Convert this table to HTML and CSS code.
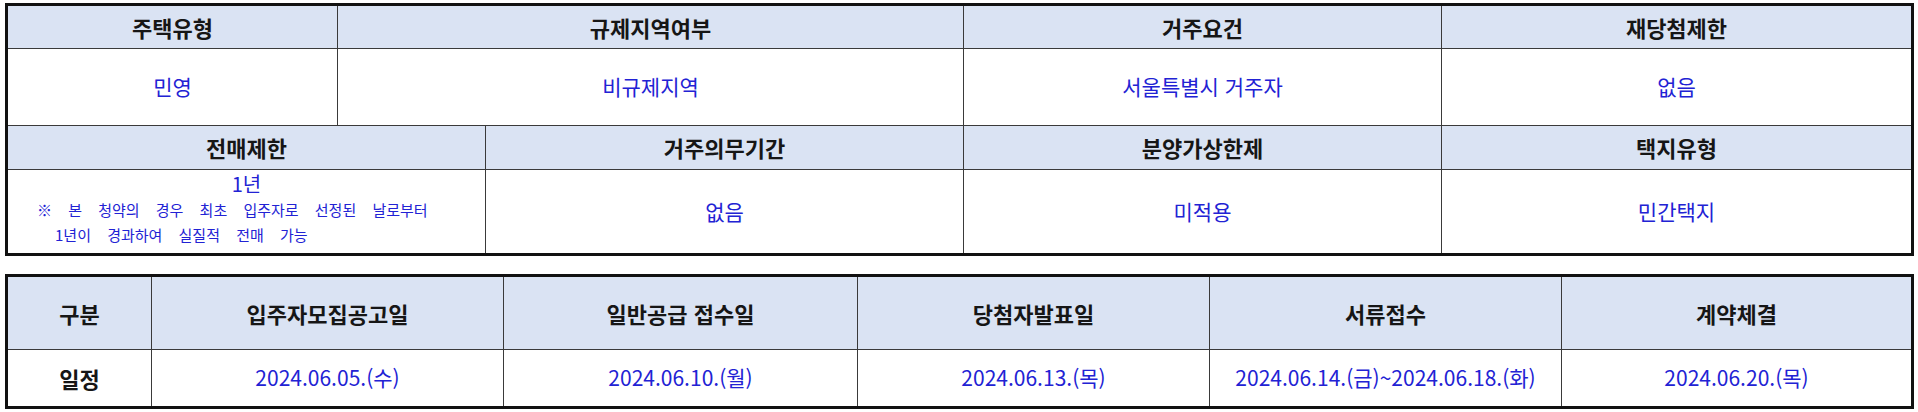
FILE: index.html
```html
<!DOCTYPE html>
<html lang="ko">
<head>
<meta charset="utf-8">
<link rel="stylesheet" href="styles.css">
</head>
<body>
<div class="page">
  <div class="info">
    <div class="row row-a head">
      <div class="cell">주택유형</div>
      <div class="cell">규제지역여부</div>
      <div class="cell">거주요건</div>
      <div class="cell">재당첨제한</div>
    </div>
    <div class="row row-a data data-1">
      <div class="cell">민영</div>
      <div class="cell">비규제지역</div>
      <div class="cell">서울특별시 거주자</div>
      <div class="cell">없음</div>
    </div>
    <div class="row row-b head">
      <div class="cell">전매제한</div>
      <div class="cell">거주의무기간</div>
      <div class="cell">분양가상한제</div>
      <div class="cell">택지유형</div>
    </div>
    <div class="row row-b data data-2">
      <div class="cell resale">
        <div class="resale-main">1년</div>
        <div class="resale-note">
          <div>※ 본 청약의 경우 최초 입주자로 선정된 날로부터</div>
          <div class="indent">1년이 경과하여 실질적 전매 가능</div>
        </div>
      </div>
      <div class="cell">없음</div>
      <div class="cell">미적용</div>
      <div class="cell">민간택지</div>
    </div>
  </div>

  <div class="schedule">
    <div class="row row-c head head-c">
      <div class="cell">구분</div>
      <div class="cell">입주자모집공고일</div>
      <div class="cell">일반공급 접수일</div>
      <div class="cell">당첨자발표일</div>
      <div class="cell">서류접수</div>
      <div class="cell">계약체결</div>
    </div>
    <div class="row row-c data data-c">
      <div class="cell label">일정</div>
      <div class="cell">2024.06.05.(수)</div>
      <div class="cell">2024.06.10.(월)</div>
      <div class="cell">2024.06.13.(목)</div>
      <div class="cell">2024.06.14.(금)~2024.06.18.(화)</div>
      <div class="cell">2024.06.20.(목)</div>
    </div>
  </div>
</div>
</body>
</html>
```

FILE: styles.css
```css
html, body {
  margin: 0;
  padding: 0;
  background: #ffffff;
}

body {
  font-family: "Noto Sans CJK KR", "Noto Sans", sans-serif;
  color: #111111;
}

.page {
  padding: 3px 0 0 5px;
  display: flex;
  flex-direction: column;
  gap: 18px;
}

.info,
.schedule {
  width: 1909px;
  box-sizing: border-box;
  border: 3px solid #111111;
  display: flex;
  flex-direction: column;
}

.row {
  display: grid;
  border-bottom: 1px solid #3a3a3a;
}

.row:last-child {
  border-bottom: none;
}

.row-a {
  grid-template-columns: 329px 626px 478px 470px;
}

.row-b {
  grid-template-columns: 477px 478px 478px 470px;
}

.row-c {
  grid-template-columns: 143px 352px 354px 352px 352px 350px;
}

.cell {
  display: flex;
  align-items: center;
  justify-content: center;
  text-align: center;
  border-left: 1px solid #3a3a3a;
  line-height: 1.2;
}

.cell:first-child {
  border-left: none;
}

.head {
  background: #dae3f3;
}

.head .cell {
  font-size: 22px;
  font-weight: 700;
  color: #161616;
}

.data .cell {
  font-size: 21px;
  color: #2222d4;
}

.row-a.head { height: 42px; }
.data-1 { height: 76px; }
.row-b.head { height: 43px; }
.data-2 { height: 83px; }

.head-c { height: 72px; }
.data-c { height: 56px; }

.data-c .label {
  color: #161616;
  font-weight: 700;
  font-size: 22px;
}

.resale {
  flex-direction: column;
  align-items: stretch;
  justify-content: flex-start;
}

.resale-main {
  font-size: 20px;
  line-height: 26px;
  margin-top: 1px;
}

.resale-note {
  text-align: left;
  padding-left: 29px;
  font-size: 15px;
  line-height: 25px;
  word-spacing: 12px;
}

.resale-note .indent {
  padding-left: 18px;
}
```
